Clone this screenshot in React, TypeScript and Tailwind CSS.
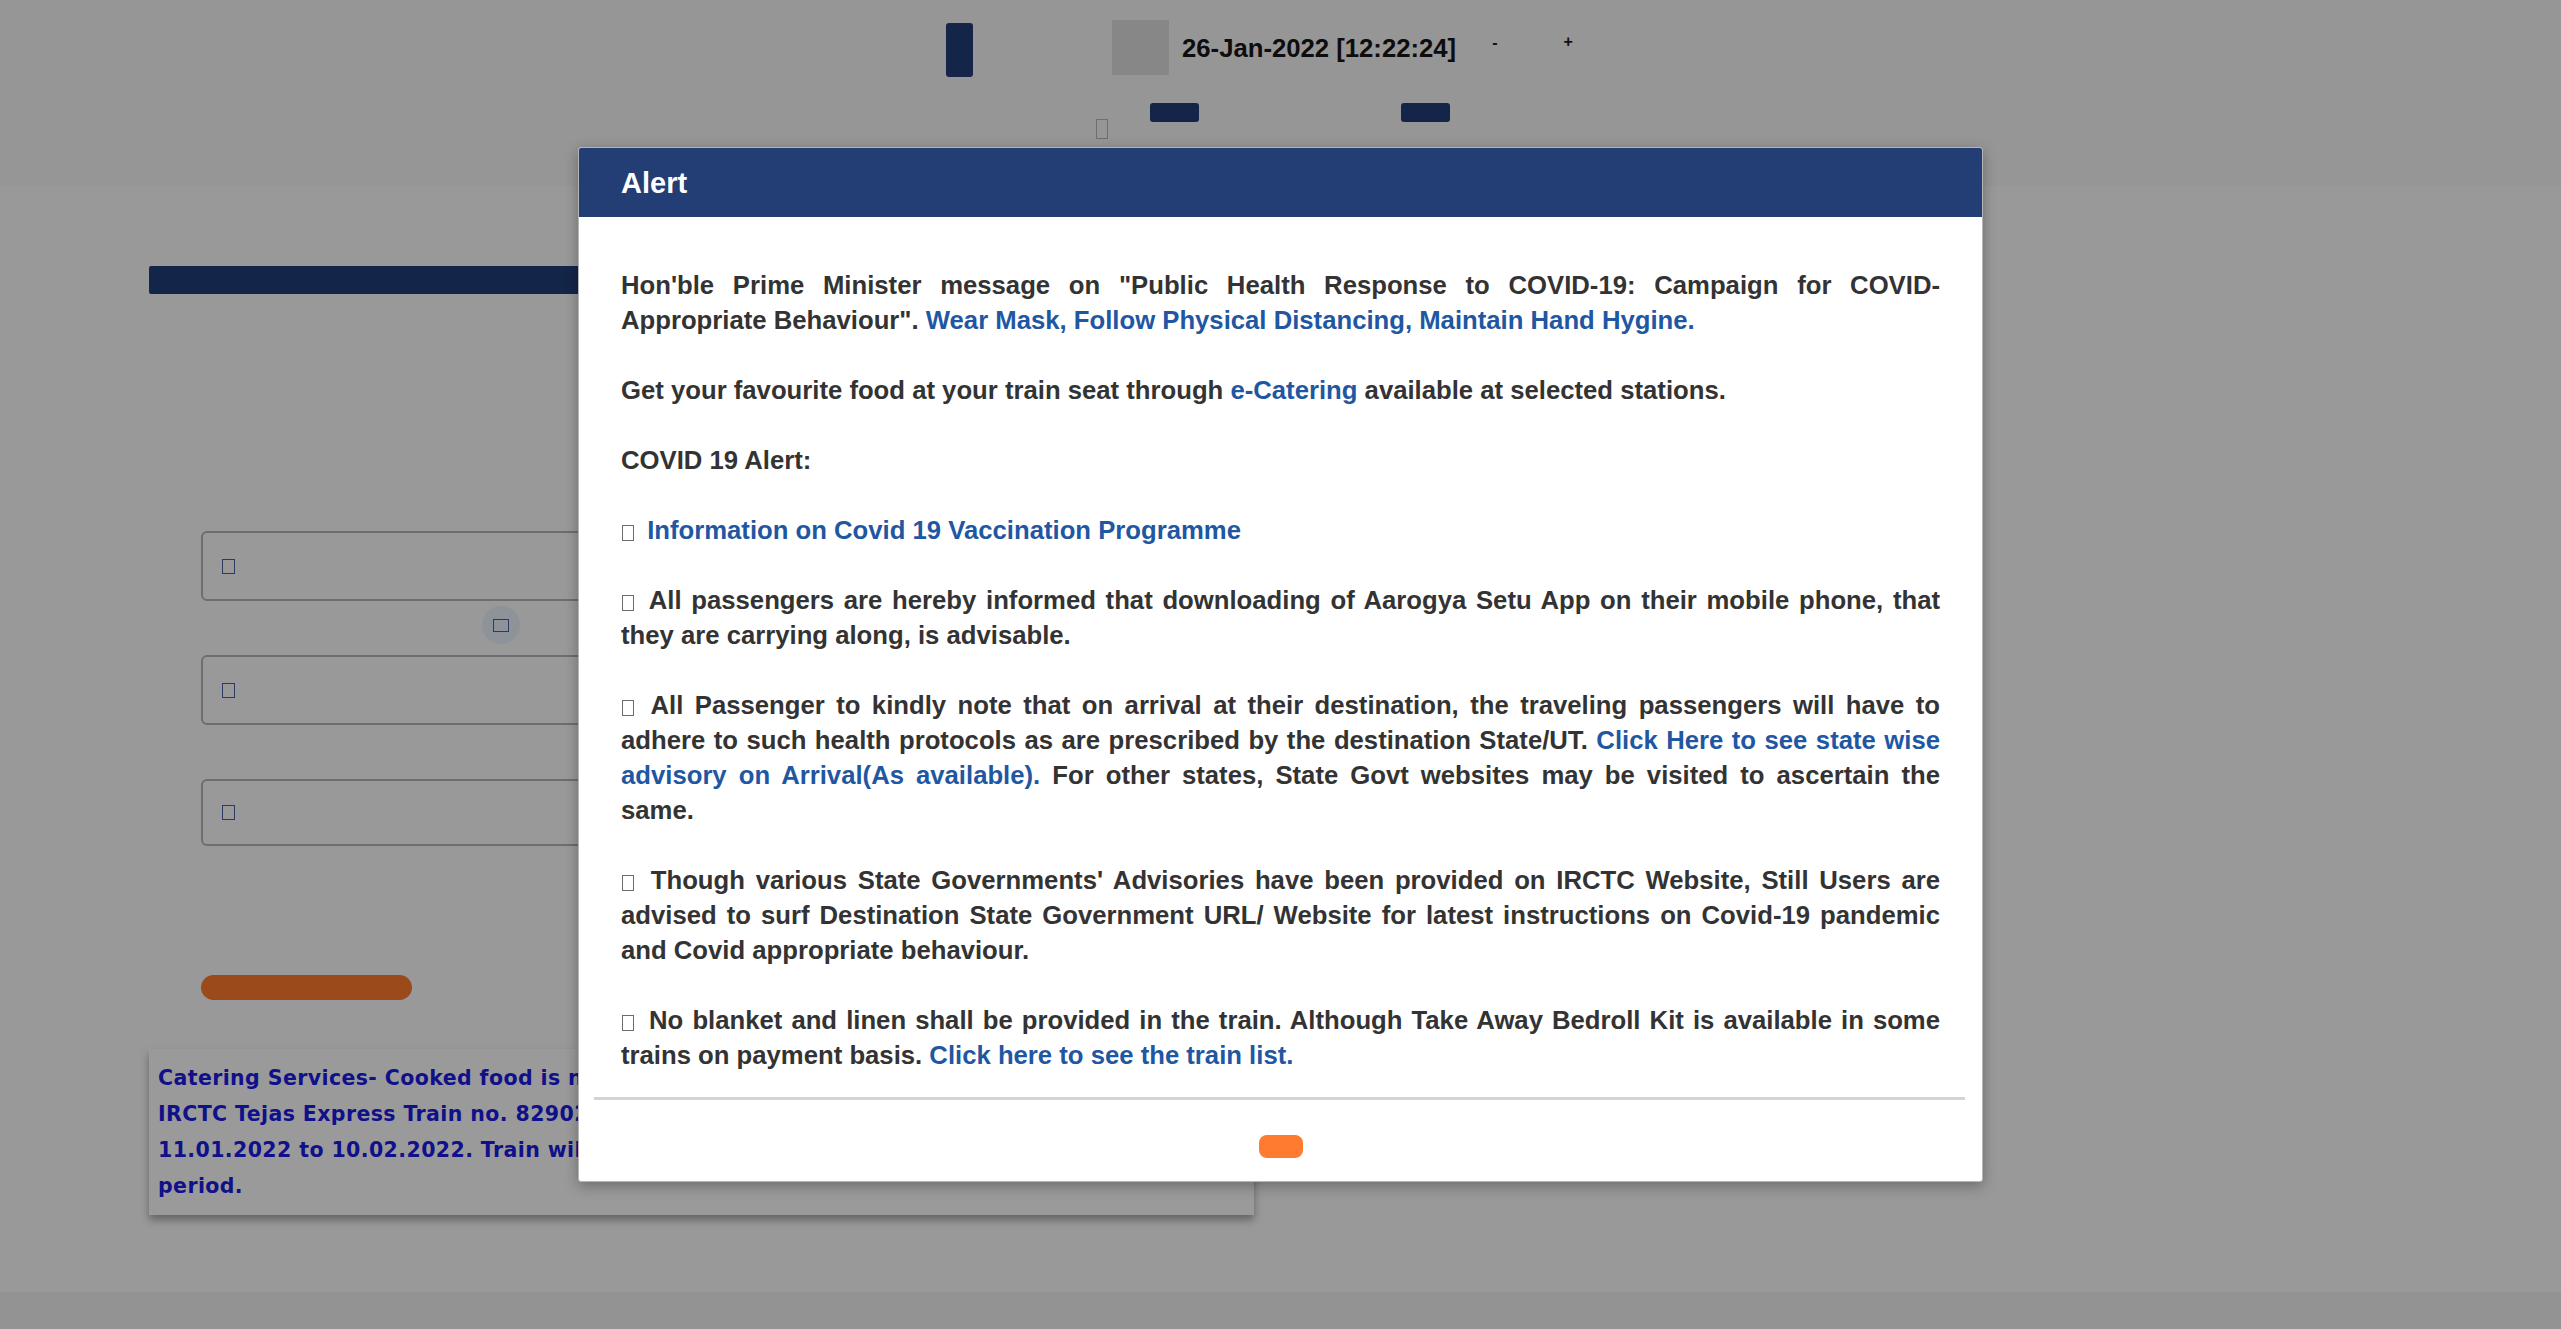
import React from "react";

const Tofu = () => (
  <span className="inline-block align-[-2px] w-[12px] h-[16px] border border-[#6b6b6b] ml-[1px] mr-[6px]" />
);

const L = ({ children }: { children: React.ReactNode }) => (
  <span className="text-[#1f57a2]">{children}</span>
);

export default function App() {
  return (
    <div className="relative w-[2561px] h-[1329px] overflow-hidden bg-[#999999] font-['Liberation_Sans',Arial,sans-serif]">
      {/* top header band */}
      <div className="h-[186px] bg-[#969696] flex flex-col">
        <div className="flex items-start pl-[946px] pt-[20px]">
          <div className="mt-[3px] w-[27px] h-[54px] rounded-[3px] bg-[#15254a]" />
          <div className="ml-[139px] w-[57px] h-[55px] bg-[#878787]" />
          <div className="ml-[13px] mt-[13px] text-[25.7px] leading-[30px] font-bold text-[#0d0d0d]">
            26-Jan-2022 [12:22:24]
          </div>
          <div className="ml-[36px] mt-[13px] text-[16px] leading-[20px] font-bold text-[#111]">-</div>
          <div className="ml-[66px] mt-[12px] text-[16px] leading-[20px] font-bold text-[#111]">+</div>
        </div>
        <div className="flex items-start pl-[1096px] mt-[26px]">
          <div className="mt-[16px] w-[12px] h-[20px] border border-[#6e6e6e]" />
          <div className="ml-[42px] w-[49px] h-[19px] rounded-[3px] bg-[#15254a]" />
          <div className="ml-[202px] w-[49px] h-[19px] rounded-[3px] bg-[#15254a]" />
        </div>
      </div>

      {/* main body */}
      <div className="h-[1106px] pl-[149px] flex flex-col">
        <div className="mt-[80px] w-[1105px] h-[28px] rounded-[2px] bg-[#14254a]" />
        <div className="pl-[52px] mt-[237px] flex flex-col">
          <div className="w-[1000px] h-[70px] rounded-[6px] border-2 border-[#6e6e6e] flex items-center pl-[19px]">
            <div className="w-[13px] h-[15px] border border-[#2b3a66]" />
          </div>
          <div className="ml-[281px] mt-[5px] w-[38px] h-[38px] rounded-full bg-[#8e9399] flex items-center justify-center">
            <div className="w-[16px] h-[13px] border border-[#2b3a66]" />
          </div>
          <div className="mt-[11px] w-[1000px] h-[70px] rounded-[6px] border-2 border-[#6e6e6e] flex items-center pl-[19px]">
            <div className="w-[13px] h-[15px] border border-[#2b3a66]" />
          </div>
          <div className="mt-[54px] w-[1000px] h-[67px] rounded-[6px] border-2 border-[#6e6e6e] flex items-center pl-[19px]">
            <div className="w-[13px] h-[15px] border border-[#2b3a66]" />
          </div>
          <div className="mt-[129px] w-[211px] h-[25px] rounded-full bg-[#9b4a1b]" />
        </div>
        <div className="mt-[49px] w-[1105px] h-[166px] bg-[#9a9a9a] shadow-[0_5px_8px_rgba(0,0,0,0.35)] pl-[9px] pt-[11px] whitespace-nowrap overflow-hidden font-['DejaVu_Sans',Verdana,sans-serif] font-bold text-[20.5px] leading-[36px] tracking-[0.4px] text-[#10108a]">
          <div>Catering Services- Cooked food is now available on selected trains.</div>
          <div>IRCTC Tejas Express Train no. 82902/82901 (ADI-MMCT-ADI) will run 3 days a week</div>
          <div>11.01.2022 to 10.02.2022. Train will remain cancelled on Monday and Wednesday</div>
          <div>period.</div>
        </div>
      </div>
      <div className="h-[37px] bg-[#939393]" />

      {/* modal */}
      <div className="absolute left-[578px] top-[147px] w-[1405px] h-[1035px] bg-white border border-[#b5b5b5] rounded-[3px] shadow-[0_4px_14px_rgba(0,0,0,0.3)] flex flex-col overflow-hidden">
        <div className="h-[69px] shrink-0 bg-[#223e74] flex items-center px-[42px]">
          <span className="text-white font-bold text-[29px] leading-[34px]">Alert</span>
        </div>
        <div className="px-[42px] pt-[51px] text-[25.7px] leading-[35px] font-bold text-[#333333] text-justify flex flex-col gap-[35px]">
          <p>
            Hon'ble Prime Minister message on "Public Health Response to COVID-19: Campaign for COVID-Appropriate Behaviour".{" "}
            <L>Wear Mask, Follow Physical Distancing, Maintain Hand Hygine.</L>
          </p>
          <p>
            Get your favourite food at your train seat through <L>e-Catering</L> available at selected stations.
          </p>
          <p>COVID 19 Alert:</p>
          <p>
            <Tofu /> <L>Information on Covid 19 Vaccination Programme</L>
          </p>
          <p>
            <Tofu /> All passengers are hereby informed that downloading of Aarogya Setu App on their mobile phone, that they are carrying along, is advisable.
          </p>
          <p>
            <Tofu /> All Passenger to kindly note that on arrival at their destination, the traveling passengers will have to adhere to such health protocols as are prescribed by the destination State/UT.{" "}
            <L>Click Here to see state wise advisory on Arrival(As available).</L> For other states, State Govt websites may be visited to ascertain the same.
          </p>
          <p>
            <Tofu /> Though various State Governments' Advisories have been provided on IRCTC Website, Still Users are advised to surf Destination State Government URL/ Website for latest instructions on Covid-19 pandemic and Covid appropriate behaviour.
          </p>
          <p>
            <Tofu /> No blanket and linen shall be provided in the train. Although Take Away Bedroll Kit is available in some trains on payment basis.{" "}
            <L>Click here to see the train list.</L>
          </p>
        </div>
        <div className="mt-[24px] ml-[15px] mr-[17px] h-[3px] bg-[#d3d3d3]" />
        <div className="flex justify-center mt-[35px]">
          <div className="w-[44px] h-[23px] rounded-[8px] bg-[#fe7b2f]" />
        </div>
      </div>
    </div>
  );
}
